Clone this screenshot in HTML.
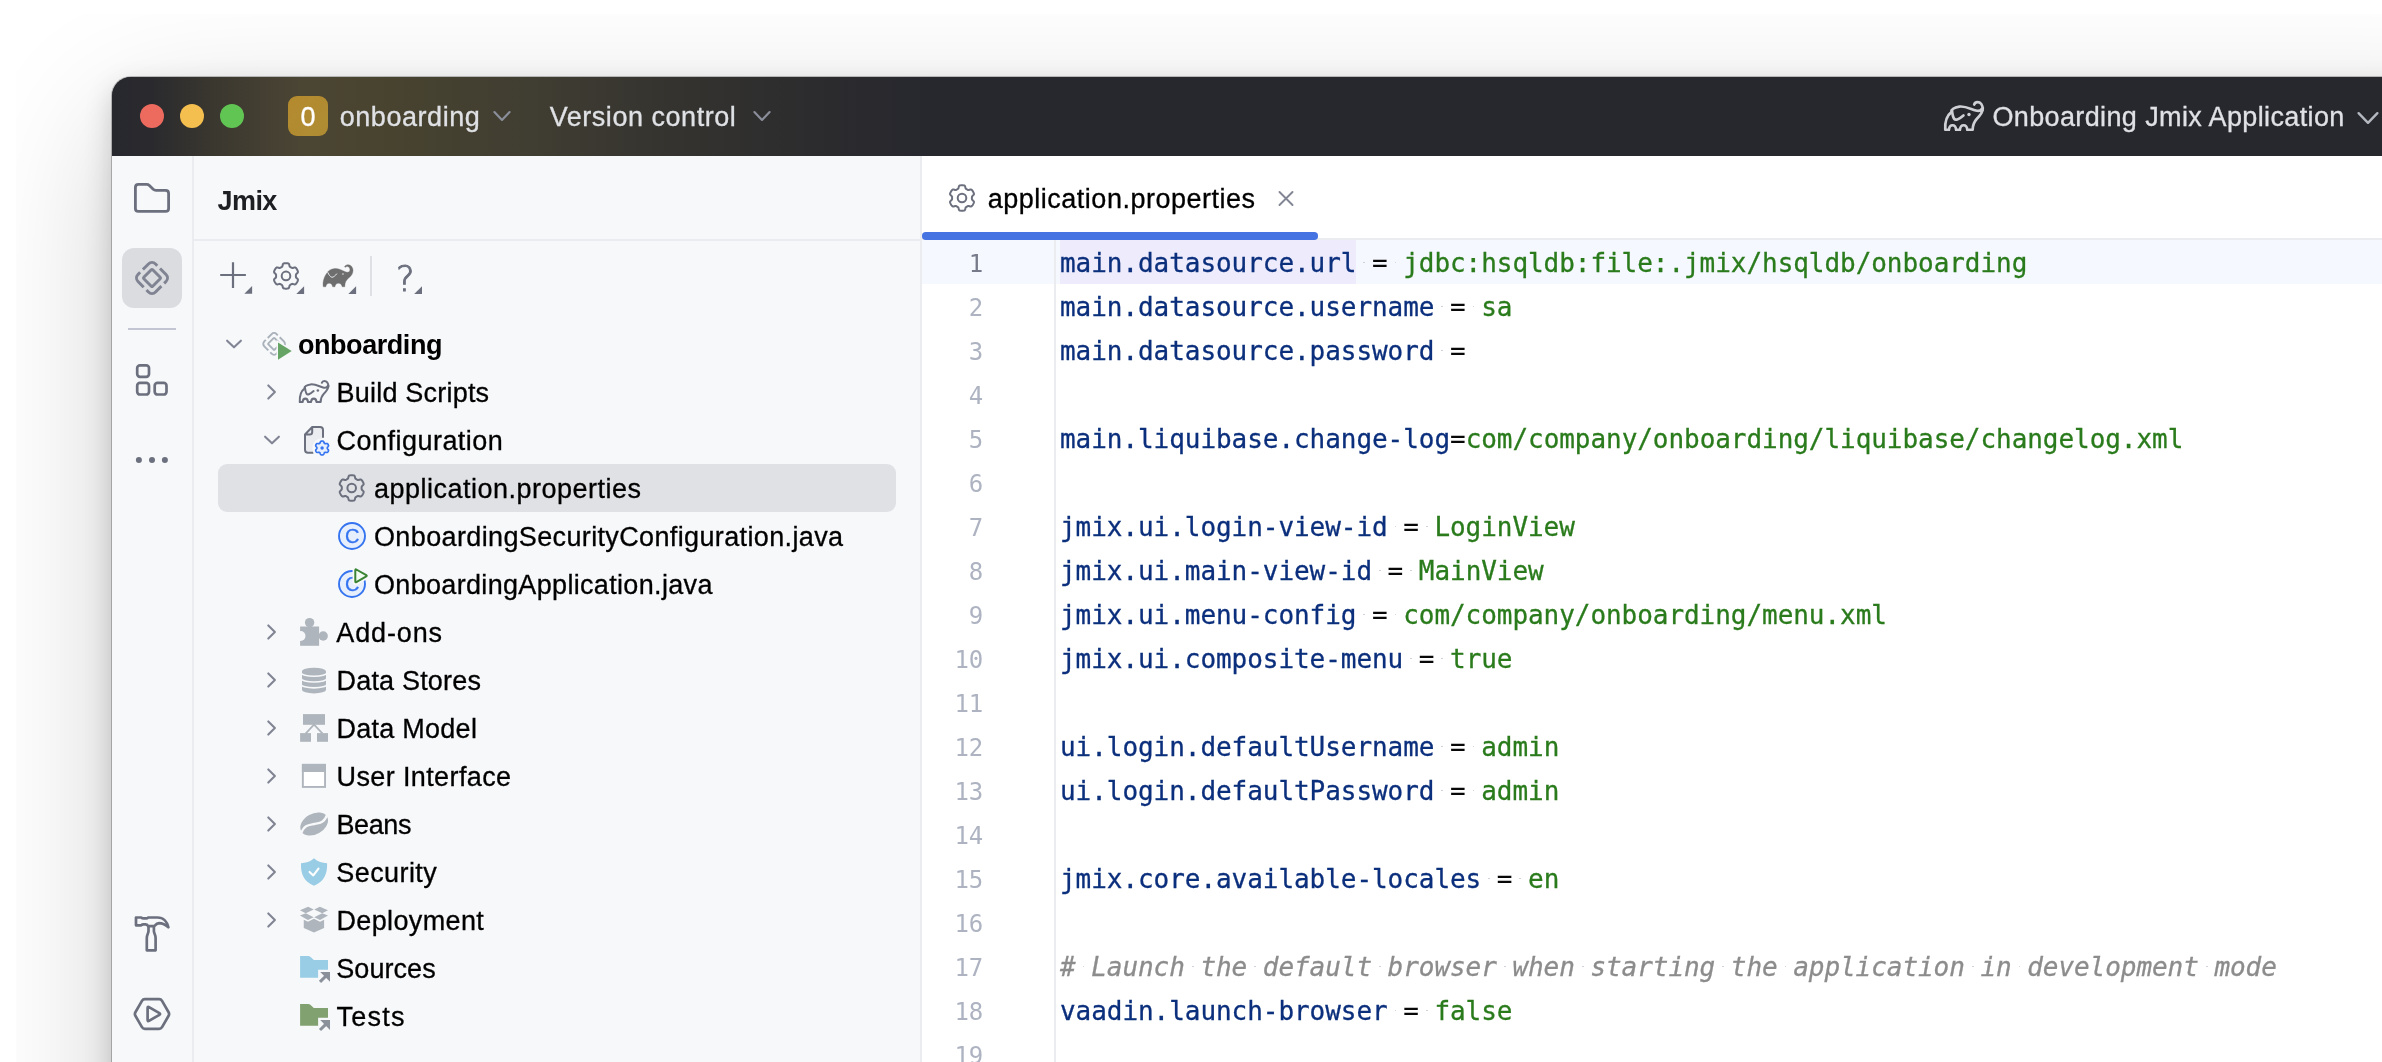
<!DOCTYPE html>
<html><head><meta charset="utf-8"><title>Jmix</title>
<style>
html,body{margin:0;padding:0;background:#fff;}
body{width:2382px;height:1062px;overflow:hidden;position:relative;font-family:'Liberation Sans', sans-serif;}
#win{position:absolute;left:112px;top:77px;width:2400px;height:1100px;border-radius:19px;background:linear-gradient(#27282E 0,#27282E 79px,#F7F8FA 79px);
 box-shadow:0 0 0 1px rgba(0,0,0,.22), 0 10px 28px rgba(0,0,0,.19), 0 45px 140px rgba(0,0,0,.19);overflow:hidden;}
#clipL{position:absolute;left:0;top:0;width:15.5px;height:1062px;background:#fff;}
#clipT{position:absolute;left:0;top:0;width:2382px;height:13.5px;background:#fff;}
#abs{position:absolute;left:0;top:0;width:2382px;height:1062px;overflow:hidden;will-change:transform;}
#tb{position:absolute;left:112px;top:77px;width:2300px;height:79px;border-top-left-radius:19px;
 background:linear-gradient(90deg,#27282E 0px,#2A2A2E 40px,#3A372F 100px,#4B4534 190px,#49442F 260px,#403D32 420px,#34332F 560px,#2B2B2E 720px,#27282E 820px);}
.dot{position:absolute;width:24px;height:24px;border-radius:50%;top:104px;}
#badge{position:absolute;left:288px;top:96px;width:40px;height:40px;border-radius:9px;background:linear-gradient(135deg,#B58A2E,#AE8C33);}
.t{position:absolute;white-space:pre;line-height:40px;height:40px;-webkit-text-stroke:0.3px currentColor;}
#strip{position:absolute;left:112px;top:156px;width:81px;height:920px;background:#F7F8FA;}
#stripsep{position:absolute;left:192px;top:156px;width:2px;height:920px;background:#EBECF0;}
#side{position:absolute;left:194px;top:156px;width:727px;height:920px;background:#F7F8FA;}
#hsep{position:absolute;left:194px;top:239px;width:727px;height:2px;background:#EBECF0;}
#selbtn{position:absolute;left:122px;top:248px;width:60px;height:60px;border-radius:12px;background:#DBDCE0;}
#ssep{position:absolute;left:128px;top:328px;width:48px;height:2px;background:#C3C6D2;}
#selrow{position:absolute;left:218px;top:464px;width:678px;height:48px;border-radius:9px;background:#DFE1E5;}
#tsep{position:absolute;left:370px;top:256px;width:2px;height:40px;background:#DFE0E4;}
#ed{position:absolute;left:922px;top:156px;width:1500px;height:920px;background:#fff;}
#edl{position:absolute;left:920px;top:156px;width:2px;height:920px;background:#EBECF0;}
#tabline{position:absolute;left:922px;top:238px;width:1500px;height:1.5px;background:#EBECF0;}
#tabul{position:absolute;left:922px;top:232px;width:396px;height:7.5px;border-radius:3.75px;background:#4573E2;}
#curline{position:absolute;left:922px;top:240px;width:1500px;height:44px;background:#F5F8FE;}
#curkey{position:absolute;left:1060px;top:240px;width:296px;height:44px;background:#EDEBFC;}
#gsep{position:absolute;left:1054px;top:240px;width:2px;height:900px;background:#EBECF0;}
.ln{position:absolute;left:922px;width:61.2px;text-align:right;font-family:'DejaVu Sans Mono', 'Liberation Mono', monospace;font-size:24px;line-height:44px;height:44px;color:#AEB3C2;padding-top:2px;box-sizing:border-box;letter-spacing:-0.053px;}
.ln.cur{color:#767A8A;}
.cl{position:absolute;left:1060px;white-space:pre;font-family:'DejaVu Sans Mono', 'Liberation Mono', monospace;font-size:26px;line-height:44px;height:44px;padding-top:1px;box-sizing:border-box;color:#080808;letter-spacing:-0.053px;-webkit-text-stroke:0.3px currentColor;}
.k{color:#0B2F7C;} .v{color:#2A7B1C;} .e{color:#080808;-webkit-text-stroke:0.1px #080808;} .c{color:#8C8C8C;font-style:italic;}
.ws{position:absolute;width:1.8px;height:1.8px;background:#C9CCD4;border-radius:1px;}
svg{position:absolute;overflow:visible;}
</style></head><body>
<div id="win"></div>
<div id="clipL"></div><div id="clipT"></div>
<div id="abs">
<div id="tb"></div>
<div class="dot" style="left:140px;background:#EC6A5E"></div>
<div class="dot" style="left:180px;background:#F4BF4F"></div>
<div class="dot" style="left:220px;background:#61C554"></div>
<div id="badge"></div>
<div id="strip"></div><div id="stripsep"></div>
<div id="side"></div><div id="hsep"></div>
<div id="selbtn"></div><div id="ssep"></div><div id="selrow"></div><div id="tsep"></div>
<div id="ed"></div><div id="edl"></div>
<div id="curline"></div><div id="curkey"></div><div id="tabline"></div><div id="tabul"></div><div id="gsep"></div>
<div class="ln cur" style="top:240px">1</div>
<div class="cl" style="top:240px"><span class="k">main.datasource.url</span><span class="e"> = </span><span class="v">jdbc:hsqldb:file:.jmix/hsqldb/onboarding</span></div>
<i class="ws" style="left:1363.4px;top:261.7px"></i>
<i class="ws" style="left:1394.6px;top:261.7px"></i>
<div class="ln " style="top:284px">2</div>
<div class="cl" style="top:284px"><span class="k">main.datasource.username</span><span class="e"> = </span><span class="v">sa</span></div>
<i class="ws" style="left:1441.4px;top:305.7px"></i>
<i class="ws" style="left:1472.6px;top:305.7px"></i>
<div class="ln " style="top:328px">3</div>
<div class="cl" style="top:328px"><span class="k">main.datasource.password</span><span class="e"> =</span></div>
<i class="ws" style="left:1441.4px;top:349.7px"></i>
<div class="ln " style="top:372px">4</div>
<div class="ln " style="top:416px">5</div>
<div class="cl" style="top:416px"><span class="k">main.liquibase.change-log</span><span class="e">=</span><span class="v">com/company/onboarding/liquibase/changelog.xml</span></div>
<div class="ln " style="top:460px">6</div>
<div class="ln " style="top:504px">7</div>
<div class="cl" style="top:504px"><span class="k">jmix.ui.login-view-id</span><span class="e"> = </span><span class="v">LoginView</span></div>
<i class="ws" style="left:1394.6px;top:525.7px"></i>
<i class="ws" style="left:1425.8px;top:525.7px"></i>
<div class="ln " style="top:548px">8</div>
<div class="cl" style="top:548px"><span class="k">jmix.ui.main-view-id</span><span class="e"> = </span><span class="v">MainView</span></div>
<i class="ws" style="left:1379.0px;top:569.7px"></i>
<i class="ws" style="left:1410.2px;top:569.7px"></i>
<div class="ln " style="top:592px">9</div>
<div class="cl" style="top:592px"><span class="k">jmix.ui.menu-config</span><span class="e"> = </span><span class="v">com/company/onboarding/menu.xml</span></div>
<i class="ws" style="left:1363.4px;top:613.7px"></i>
<i class="ws" style="left:1394.6px;top:613.7px"></i>
<div class="ln " style="top:636px">10</div>
<div class="cl" style="top:636px"><span class="k">jmix.ui.composite-menu</span><span class="e"> = </span><span class="v">true</span></div>
<i class="ws" style="left:1410.2px;top:657.7px"></i>
<i class="ws" style="left:1441.4px;top:657.7px"></i>
<div class="ln " style="top:680px">11</div>
<div class="ln " style="top:724px">12</div>
<div class="cl" style="top:724px"><span class="k">ui.login.defaultUsername</span><span class="e"> = </span><span class="v">admin</span></div>
<i class="ws" style="left:1441.4px;top:745.7px"></i>
<i class="ws" style="left:1472.6px;top:745.7px"></i>
<div class="ln " style="top:768px">13</div>
<div class="cl" style="top:768px"><span class="k">ui.login.defaultPassword</span><span class="e"> = </span><span class="v">admin</span></div>
<i class="ws" style="left:1441.4px;top:789.7px"></i>
<i class="ws" style="left:1472.6px;top:789.7px"></i>
<div class="ln " style="top:812px">14</div>
<div class="ln " style="top:856px">15</div>
<div class="cl" style="top:856px"><span class="k">jmix.core.available-locales</span><span class="e"> = </span><span class="v">en</span></div>
<i class="ws" style="left:1488.2px;top:877.7px"></i>
<i class="ws" style="left:1519.4px;top:877.7px"></i>
<div class="ln " style="top:900px">16</div>
<div class="ln " style="top:944px">17</div>
<div class="cl" style="top:944px"><span class="c"># Launch the default browser when starting the application in development mode</span></div>
<i class="ws" style="left:1082.6px;top:965.7px"></i>
<i class="ws" style="left:1191.8px;top:965.7px"></i>
<i class="ws" style="left:1254.2px;top:965.7px"></i>
<i class="ws" style="left:1379.0px;top:965.7px"></i>
<i class="ws" style="left:1503.8px;top:965.7px"></i>
<i class="ws" style="left:1581.8px;top:965.7px"></i>
<i class="ws" style="left:1722.2px;top:965.7px"></i>
<i class="ws" style="left:1784.6px;top:965.7px"></i>
<i class="ws" style="left:1971.8px;top:965.7px"></i>
<i class="ws" style="left:2018.6px;top:965.7px"></i>
<i class="ws" style="left:2205.8px;top:965.7px"></i>
<div class="ln " style="top:988px">18</div>
<div class="cl" style="top:988px"><span class="k">vaadin.launch-browser</span><span class="e"> = </span><span class="v">false</span></div>
<i class="ws" style="left:1394.6px;top:1009.7px"></i>
<i class="ws" style="left:1425.8px;top:1009.7px"></i>
<div class="ln " style="top:1032px">19</div>
<span class="t" style="left:339.7px;top:96.6px;font-size:27px;font-weight:400;color:#DFE1E5;letter-spacing:0.553px">onboarding</span>
<span class="t" style="left:549.7px;top:96.6px;font-size:27px;font-weight:400;color:#DFE1E5;letter-spacing:0.535px">Version control</span>
<span class="t" style="left:1992.4px;top:96.6px;font-size:27px;font-weight:400;color:#DFE1E5;letter-spacing:0.377px">Onboarding Jmix Application</span>
<span class="t" style="left:300.6px;top:96.6px;font-size:27px;font-weight:400;color:#FFFFFF;letter-spacing:0.000px">0</span>
<span class="t" style="left:217.6px;top:181.0px;font-size:27px;font-weight:700;color:#1E1F22;letter-spacing:-0.582px;-webkit-text-stroke:0">Jmix</span>
<span class="t" style="left:297.9px;top:324.6px;font-size:27px;font-weight:700;color:#000000;letter-spacing:-0.432px;-webkit-text-stroke:0">onboarding</span>
<span class="t" style="left:336.6px;top:373.2px;font-size:27px;font-weight:400;color:#000000;letter-spacing:0.203px">Build Scripts</span>
<span class="t" style="left:336.6px;top:421.2px;font-size:27px;font-weight:400;color:#000000;letter-spacing:0.466px">Configuration</span>
<span class="t" style="left:374.0px;top:469.2px;font-size:27px;font-weight:400;color:#000000;letter-spacing:0.492px">application.properties</span>
<span class="t" style="left:374.0px;top:517.2px;font-size:27px;font-weight:400;color:#000000;letter-spacing:0.366px">OnboardingSecurityConfiguration.java</span>
<span class="t" style="left:374.0px;top:565.2px;font-size:27px;font-weight:400;color:#000000;letter-spacing:0.327px">OnboardingApplication.java</span>
<span class="t" style="left:336.3px;top:613.2px;font-size:27px;font-weight:400;color:#000000;letter-spacing:0.870px">Add-ons</span>
<span class="t" style="left:336.5px;top:661.2px;font-size:27px;font-weight:400;color:#000000;letter-spacing:0.182px">Data Stores</span>
<span class="t" style="left:336.5px;top:709.2px;font-size:27px;font-weight:400;color:#000000;letter-spacing:0.258px">Data Model</span>
<span class="t" style="left:336.5px;top:757.2px;font-size:27px;font-weight:400;color:#000000;letter-spacing:0.386px">User Interface</span>
<span class="t" style="left:336.5px;top:805.2px;font-size:27px;font-weight:400;color:#000000;letter-spacing:-0.391px">Beans</span>
<span class="t" style="left:336.3px;top:853.2px;font-size:27px;font-weight:400;color:#000000;letter-spacing:0.422px">Security</span>
<span class="t" style="left:336.5px;top:901.2px;font-size:27px;font-weight:400;color:#000000;letter-spacing:0.358px">Deployment</span>
<span class="t" style="left:336.3px;top:949.2px;font-size:27px;font-weight:400;color:#000000;letter-spacing:0.056px">Sources</span>
<span class="t" style="left:336.6px;top:997.2px;font-size:27px;font-weight:400;color:#000000;letter-spacing:1.192px">Tests</span>
<span class="t" style="left:987.8px;top:178.9px;font-size:27px;font-weight:400;color:#000000;letter-spacing:0.501px">application.properties</span>
<svg width="2382" height="1062" viewBox="0 0 2382 1062" style="left:0;top:0">
<path d="M138.4 184.4 H146.6 Q148.2 184.4 149.4 185.5 L153.2 189.2 Q154.4 190.3 156 190.3 H165.6 Q168.6 190.3 168.6 193.3 V208.4 Q168.6 211.4 165.6 211.4 H138.4 Q135.4 211.4 135.4 208.4 V187.4 Q135.4 184.4 138.4 184.4Z" fill="none" stroke="#6C707E" stroke-width="2.8" stroke-linejoin="round"/>
<g transform="translate(152 278) rotate(45)" fill="none" stroke="#7F8392" stroke-width="2.95"><rect x="-12.40" y="-12.40" width="24.80" height="24.80" rx="5.00" stroke-dasharray="18.75 3.90" stroke-dashoffset="16.30"/><rect x="-6.30" y="-6.30" width="12.60" height="12.60" rx="1.00"/></g>
<rect x="137.2" y="365.3" width="11.8" height="11.6" rx="2.8" fill="none" stroke="#6C707E" stroke-width="2.7"/>
<rect x="137.2" y="382.9" width="11.8" height="11.6" rx="2.8" fill="none" stroke="#6C707E" stroke-width="2.7"/>
<rect x="154.7" y="382.9" width="11.8" height="11.6" rx="2.8" fill="none" stroke="#6C707E" stroke-width="2.7"/>
<circle cx="138.9" cy="460" r="3" fill="#6C707E"/>
<circle cx="152" cy="460" r="3" fill="#6C707E"/>
<circle cx="164.9" cy="460" r="3" fill="#6C707E"/>
<g fill="none" stroke="#6C707E" stroke-width="2.7" stroke-linejoin="round" stroke-linecap="round"><path d="M136 917.5 H141.2 Q142.2 918.4 143.6 918.4 H146 Q147.3 918.4 148.3 917.5 H157.5 C163.5 917.5 167.3 922 168.4 927.3 C165.5 924.6 162.5 923.2 159 923.1 C157.3 923.1 155.6 924.6 154.2 926.1 H148.2 Q147 924.4 145.5 924.4 H143.4 Q142.2 924.4 141.2 925.3 H136 Z"/><path d="M148.5 926.3 V931 C148.5 933.5 146.8 934.8 146.8 938 V950.3 H155.6 V938 C155.6 934.8 153.9 933.5 153.9 931 V926.3"/></g>
<path d="M135.39 1015.74 Q134.40 1014.00 135.39 1012.26 L141.95 1000.84 Q142.94 999.10 144.94 999.10 L159.06 999.10 Q161.06 999.10 162.05 1000.84 L168.61 1012.26 Q169.60 1014.00 168.61 1015.74 L162.05 1027.16 Q161.06 1028.90 159.06 1028.90 L144.94 1028.90 Q142.94 1028.90 141.95 1027.16 Z" fill="none" stroke="#6C707E" stroke-width="2.7"/>
<path d="M147.60 1008.00 Q147.60 1006.40 148.99 1007.20 L159.41 1013.20 Q160.80 1014.00 159.41 1014.80 L148.99 1020.80 Q147.60 1021.60 147.60 1020.00 Z" fill="none" stroke="#6C707E" stroke-width="2.7" stroke-linejoin="round"/>
<path d="M220.2 275 H245.9 M233 262.3 V288" fill="none" stroke="#6C707E" stroke-width="2.2"/>
<path d="M252.10000000000002 286 L252.10000000000002 293.8 L244.3 293.8Z" fill="#6C707E"/>
<path d="M295.90 275.90 L295.90 275.47 L295.91 275.03 L295.98 274.59 L296.24 274.09 L296.89 273.49 L297.64 272.78 L297.95 272.13 L297.92 271.56 L297.76 271.03 L297.55 270.51 L297.31 270.01 L297.04 269.52 L296.75 269.05 L296.44 268.59 L296.10 268.15 L295.72 267.74 L295.24 267.43 L294.52 267.38 L293.54 267.67 L292.68 267.93 L292.13 267.92 L291.71 267.75 L291.32 267.54 L290.95 267.33 L290.58 267.11 L290.20 266.88 L289.85 266.60 L289.56 266.13 L289.35 265.26 L289.12 264.26 L288.71 263.66 L288.20 263.40 L287.66 263.28 L287.11 263.20 L286.56 263.16 L286.00 263.15 L285.44 263.16 L284.89 263.20 L284.34 263.28 L283.80 263.40 L283.29 263.66 L282.88 264.26 L282.65 265.26 L282.44 266.13 L282.15 266.60 L281.80 266.88 L281.42 267.11 L281.05 267.33 L280.68 267.54 L280.29 267.75 L279.87 267.92 L279.32 267.93 L278.46 267.67 L277.48 267.38 L276.76 267.43 L276.28 267.74 L275.90 268.15 L275.56 268.59 L275.25 269.05 L274.96 269.52 L274.69 270.01 L274.45 270.51 L274.24 271.03 L274.08 271.56 L274.05 272.13 L274.36 272.78 L275.11 273.49 L275.76 274.09 L276.02 274.59 L276.09 275.03 L276.10 275.47 L276.10 275.90 L276.10 276.33 L276.09 276.77 L276.02 277.21 L275.76 277.71 L275.11 278.31 L274.36 279.02 L274.05 279.67 L274.08 280.24 L274.24 280.77 L274.45 281.29 L274.69 281.79 L274.96 282.27 L275.25 282.75 L275.56 283.21 L275.90 283.65 L276.28 284.06 L276.76 284.37 L277.48 284.42 L278.46 284.13 L279.32 283.87 L279.87 283.88 L280.29 284.05 L280.68 284.26 L281.05 284.47 L281.42 284.69 L281.80 284.92 L282.15 285.20 L282.44 285.67 L282.65 286.54 L282.88 287.54 L283.29 288.14 L283.80 288.40 L284.34 288.52 L284.89 288.60 L285.44 288.64 L286.00 288.65 L286.56 288.64 L287.11 288.60 L287.66 288.52 L288.20 288.40 L288.71 288.14 L289.12 287.54 L289.35 286.54 L289.56 285.67 L289.85 285.20 L290.20 284.92 L290.58 284.69 L290.95 284.47 L291.32 284.26 L291.71 284.05 L292.13 283.88 L292.68 283.87 L293.54 284.13 L294.52 284.42 L295.24 284.37 L295.72 284.06 L296.10 283.65 L296.44 283.21 L296.75 282.75 L297.04 282.27 L297.31 281.79 L297.55 281.29 L297.76 280.77 L297.92 280.24 L297.95 279.67 L297.64 279.02 L296.89 278.31 L296.24 277.71 L295.98 277.21 L295.91 276.77 L295.90 276.33Z" fill="none" stroke="#6C707E" stroke-width="2.0" stroke-linejoin="round"/><circle cx="286" cy="275.9" r="4.3" fill="none" stroke="#6C707E" stroke-width="2.0"/>
<path d="M304.1 286.2 L304.1 294.0 L296.3 294.0Z" fill="#6C707E"/>
<g transform="translate(312.66 253.80) scale(0.04220)"><path d="M252 782 C235 700 250 560 352 437 C370 400 420 365 500 352 C600 340 680 380 762 421 C800 440 850 445 874 413 C895 380 880 330 850 312 C820 295 790 300 768 322 L756 300 C775 268 820 255 850 258 C910 265 955 320 957 390 C958 460 920 520 882 549 C830 590 790 640 772 690 C765 720 762 750 762 782 L698 782 C690 720 650 698 609 698 C570 698 535 720 529 782 L473 782 C465 720 430 698 392 698 C355 698 320 720 312 782 Z" fill="#6E6E6E" stroke="#6E6E6E" stroke-width="8" stroke-linejoin="round"/><path d="M360 445 C385 500 420 550 457 557 C490 560 540 515 569 477" fill="none" stroke="#F7F8FA" stroke-width="21" stroke-linecap="round"/><circle cx="718" cy="477" r="17" fill="#F7F8FA"/></g>
<path d="M356.1 286.2 L356.1 294.0 L348.3 294.0Z" fill="#6C707E"/>
<path d="M422.0 286.2 L422.0 294.0 L414.2 294.0Z" fill="#6C707E"/>
<path d="M494.4 112.1 L502 119.9 L509.6 112.1" fill="none" stroke="#8A8E9A" stroke-width="2.2" stroke-linecap="round" stroke-linejoin="round"/>
<path d="M754.4 112.1 L762 119.9 L769.6 112.1" fill="none" stroke="#8A8E9A" stroke-width="2.2" stroke-linecap="round" stroke-linejoin="round"/>
<path d="M2358.6 113.2 L2368 122.8 L2377.4 113.2" fill="none" stroke="#B4B8BF" stroke-width="2.4" stroke-linecap="round" stroke-linejoin="round"/>
<g transform="translate(1930.00 86.00) scale(0.05650)" stroke-width="47" stroke-linejoin="round" stroke-linecap="round"><path d="M270 775 C262 640 300 520 378 462 C372 420 420 378 520 365 C630 352 720 410 810 435 C860 448 900 440 920 400 L935 390 C935 460 890 520 830 580 C775 640 755 700 755 775 L660 775 C650 668 540 668 530 775 L462 775 C452 668 345 668 335 775 Z" fill="none" stroke="#CED0D6"/><path d="M932 420 C940 330 890 285 840 285 C810 285 790 305 782 328" fill="none" stroke="#CED0D6"/><path d="M388 425 C395 490 405 545 425 578 C450 612 500 600 592 520" fill="none" stroke="#CED0D6" stroke-width="47"/><circle cx="690" cy="505" r="30" fill="#CED0D6" stroke="none"/></g>
<path d="M971.90 198.00 L971.90 197.57 L971.91 197.13 L971.98 196.69 L972.24 196.19 L972.89 195.59 L973.64 194.88 L973.95 194.23 L973.92 193.66 L973.76 193.13 L973.55 192.61 L973.31 192.11 L973.04 191.62 L972.75 191.15 L972.44 190.69 L972.10 190.25 L971.72 189.84 L971.24 189.53 L970.52 189.48 L969.54 189.77 L968.68 190.03 L968.13 190.02 L967.71 189.85 L967.32 189.64 L966.95 189.43 L966.58 189.21 L966.20 188.98 L965.85 188.70 L965.56 188.23 L965.35 187.36 L965.12 186.36 L964.71 185.76 L964.20 185.50 L963.66 185.38 L963.11 185.30 L962.56 185.26 L962.00 185.25 L961.44 185.26 L960.89 185.30 L960.34 185.38 L959.80 185.50 L959.29 185.76 L958.88 186.36 L958.65 187.36 L958.44 188.23 L958.15 188.70 L957.80 188.98 L957.42 189.21 L957.05 189.43 L956.68 189.64 L956.29 189.85 L955.87 190.02 L955.32 190.03 L954.46 189.77 L953.48 189.48 L952.76 189.53 L952.28 189.84 L951.90 190.25 L951.56 190.69 L951.25 191.15 L950.96 191.62 L950.69 192.11 L950.45 192.61 L950.24 193.13 L950.08 193.66 L950.05 194.23 L950.36 194.88 L951.11 195.59 L951.76 196.19 L952.02 196.69 L952.09 197.13 L952.10 197.57 L952.10 198.00 L952.10 198.43 L952.09 198.87 L952.02 199.31 L951.76 199.81 L951.11 200.41 L950.36 201.12 L950.05 201.77 L950.08 202.34 L950.24 202.87 L950.45 203.39 L950.69 203.89 L950.96 204.38 L951.25 204.85 L951.56 205.31 L951.90 205.75 L952.28 206.16 L952.76 206.47 L953.48 206.52 L954.46 206.23 L955.32 205.97 L955.87 205.98 L956.29 206.15 L956.68 206.36 L957.05 206.57 L957.42 206.79 L957.80 207.02 L958.15 207.30 L958.44 207.77 L958.65 208.64 L958.88 209.64 L959.29 210.24 L959.80 210.50 L960.34 210.62 L960.89 210.70 L961.44 210.74 L962.00 210.75 L962.56 210.74 L963.11 210.70 L963.66 210.62 L964.20 210.50 L964.71 210.24 L965.12 209.64 L965.35 208.64 L965.56 207.77 L965.85 207.30 L966.20 207.02 L966.58 206.79 L966.95 206.57 L967.32 206.36 L967.71 206.15 L968.13 205.98 L968.68 205.97 L969.54 206.23 L970.52 206.52 L971.24 206.47 L971.72 206.16 L972.10 205.75 L972.44 205.31 L972.75 204.85 L973.04 204.38 L973.31 203.89 L973.55 203.39 L973.76 202.87 L973.92 202.34 L973.95 201.77 L973.64 201.12 L972.89 200.41 L972.24 199.81 L971.98 199.31 L971.91 198.87 L971.90 198.43Z" fill="none" stroke="#6C707E" stroke-width="2.0" stroke-linejoin="round"/><circle cx="962" cy="198" r="4.3" fill="none" stroke="#6C707E" stroke-width="2.0"/>
<path d="M1279.5 192 L1292.5 205 M1292.5 192 L1279.5 205" stroke="#818594" stroke-width="1.9" fill="none" stroke-linecap="round"/>
<path d="M227.1 340.7 L234 347.3 L240.9 340.7" fill="none" stroke="#818594" stroke-width="2.1" stroke-linecap="round" stroke-linejoin="round"/>
<path d="M268.3 385.4 L274.90000000000003 392 L268.3 398.6" fill="none" stroke="#818594" stroke-width="2.1" stroke-linecap="round" stroke-linejoin="round"/>
<path d="M265.1 436.7 L272 443.3 L278.9 436.7" fill="none" stroke="#818594" stroke-width="2.1" stroke-linecap="round" stroke-linejoin="round"/>
<path d="M268.3 625.4 L274.90000000000003 632 L268.3 638.6" fill="none" stroke="#818594" stroke-width="2.1" stroke-linecap="round" stroke-linejoin="round"/>
<path d="M268.3 673.4 L274.90000000000003 680 L268.3 686.6" fill="none" stroke="#818594" stroke-width="2.1" stroke-linecap="round" stroke-linejoin="round"/>
<path d="M268.3 721.4 L274.90000000000003 728 L268.3 734.6" fill="none" stroke="#818594" stroke-width="2.1" stroke-linecap="round" stroke-linejoin="round"/>
<path d="M268.3 769.4 L274.90000000000003 776 L268.3 782.6" fill="none" stroke="#818594" stroke-width="2.1" stroke-linecap="round" stroke-linejoin="round"/>
<path d="M268.3 817.4 L274.90000000000003 824 L268.3 830.6" fill="none" stroke="#818594" stroke-width="2.1" stroke-linecap="round" stroke-linejoin="round"/>
<path d="M268.3 865.4 L274.90000000000003 872 L268.3 878.6" fill="none" stroke="#818594" stroke-width="2.1" stroke-linecap="round" stroke-linejoin="round"/>
<path d="M268.3 913.4 L274.90000000000003 920 L268.3 926.6" fill="none" stroke="#818594" stroke-width="2.1" stroke-linecap="round" stroke-linejoin="round"/>
<g transform="translate(274.1 343.9) rotate(45)" fill="none" stroke="#A9B1BA" stroke-width="1.9"><rect x="-8.68" y="-8.68" width="17.36" height="17.36" rx="3.50" stroke-dasharray="13.12 2.73" stroke-dashoffset="11.41"/><rect x="-4.41" y="-4.41" width="8.82" height="8.82" rx="0.70"/></g>
<path d="M278 342.4 L291.7 350.9 L278 359.8Z" fill="#65A465" stroke="#F7F8FA" stroke-width="3" paint-order="stroke" stroke-linejoin="miter"/>
<g transform="translate(288.15 368.70) scale(0.04306)" stroke-width="47" stroke-linejoin="round" stroke-linecap="round"><path d="M270 775 C262 640 300 520 378 462 C372 420 420 378 520 365 C630 352 720 410 810 435 C860 448 900 440 920 400 L935 390 C935 460 890 520 830 580 C775 640 755 700 755 775 L660 775 C650 668 540 668 530 775 L462 775 C452 668 345 668 335 775 Z" fill="none" stroke="#6C707E"/><path d="M932 420 C940 330 890 285 840 285 C810 285 790 305 782 328" fill="none" stroke="#6C707E"/><path d="M388 425 C395 490 405 545 425 578 C450 612 500 600 592 520" fill="none" stroke="#6C707E" stroke-width="47"/><circle cx="690" cy="505" r="30" fill="#6C707E" stroke="none"/></g>
<path d="M323 437.8 V430 Q323 427 320 427 H312.2 L305 434.5 V449.8 Q305 452.8 308 452.8 H313.4" fill="#EBECF0" stroke="none"/>
<path d="M305 434.5 L312.2 427 H320 Q323 427 323 430 V448 L313 452.8 H308 Q305 452.8 305 449.8Z" fill="#EBECF0" stroke="none"/>
<path d="M323 437.8 V430 Q323 427 320 427 H312.2 L305 434.5 V449.8 Q305 452.8 308 452.8 H313.4 M312.2 427 V432 Q312.2 434.5 309.7 434.5 H305" fill="none" stroke="#6C707E" stroke-width="2" stroke-linejoin="round"/>
<circle cx="322.1" cy="448" r="9.8" fill="#F7F8FA"/>
<path d="M327.30 448.00 L327.31 447.77 L327.36 447.54 L327.47 447.29 L327.65 447.02 L327.93 446.71 L328.22 446.36 L328.43 446.00 L328.51 445.67 L328.50 445.35 L328.42 445.05 L328.30 444.77 L328.16 444.50 L328.00 444.24 L327.81 444.00 L327.59 443.79 L327.33 443.61 L326.99 443.52 L326.58 443.52 L326.13 443.60 L325.73 443.68 L325.39 443.71 L325.13 443.67 L324.90 443.60 L324.70 443.50 L324.51 443.37 L324.33 443.21 L324.17 443.00 L324.03 442.70 L323.90 442.30 L323.74 441.88 L323.54 441.52 L323.28 441.28 L323.00 441.14 L322.71 441.06 L322.41 441.01 L322.10 441.00 L321.79 441.01 L321.49 441.06 L321.20 441.14 L320.92 441.28 L320.66 441.52 L320.46 441.88 L320.30 442.30 L320.17 442.70 L320.03 443.00 L319.87 443.21 L319.69 443.37 L319.50 443.50 L319.30 443.60 L319.07 443.67 L318.81 443.71 L318.47 443.68 L318.07 443.60 L317.62 443.52 L317.21 443.52 L316.87 443.61 L316.61 443.79 L316.39 444.00 L316.20 444.24 L316.04 444.50 L315.90 444.77 L315.78 445.05 L315.70 445.35 L315.69 445.67 L315.77 446.00 L315.98 446.36 L316.27 446.71 L316.55 447.02 L316.73 447.29 L316.84 447.54 L316.89 447.77 L316.90 448.00 L316.89 448.23 L316.84 448.46 L316.73 448.71 L316.55 448.98 L316.27 449.29 L315.98 449.64 L315.77 450.00 L315.69 450.33 L315.70 450.65 L315.78 450.95 L315.90 451.23 L316.04 451.50 L316.20 451.76 L316.39 452.00 L316.61 452.21 L316.87 452.39 L317.21 452.48 L317.62 452.48 L318.07 452.40 L318.47 452.32 L318.81 452.29 L319.07 452.33 L319.30 452.40 L319.50 452.50 L319.69 452.63 L319.87 452.79 L320.03 453.00 L320.17 453.30 L320.30 453.70 L320.46 454.12 L320.66 454.48 L320.92 454.72 L321.20 454.86 L321.49 454.94 L321.79 454.99 L322.10 455.00 L322.41 454.99 L322.71 454.94 L323.00 454.86 L323.28 454.72 L323.54 454.48 L323.74 454.12 L323.90 453.70 L324.03 453.30 L324.17 453.00 L324.33 452.79 L324.51 452.63 L324.70 452.50 L324.90 452.40 L325.13 452.33 L325.39 452.29 L325.73 452.32 L326.13 452.40 L326.58 452.48 L326.99 452.48 L327.33 452.39 L327.59 452.21 L327.81 452.00 L328.00 451.76 L328.16 451.50 L328.30 451.23 L328.42 450.95 L328.50 450.65 L328.51 450.33 L328.43 450.00 L328.22 449.64 L327.93 449.29 L327.65 448.98 L327.47 448.71 L327.36 448.46 L327.31 448.23Z" fill="#E7EFFD" stroke="#3574F0" stroke-width="1.7" stroke-linejoin="round"/><circle cx="322.1" cy="448" r="1.7" fill="#3574F0"/>
<path d="M361.60 488.00 L361.60 487.57 L361.61 487.13 L361.68 486.69 L361.94 486.19 L362.59 485.59 L363.34 484.88 L363.65 484.23 L363.62 483.66 L363.46 483.13 L363.25 482.61 L363.01 482.11 L362.74 481.62 L362.45 481.15 L362.14 480.69 L361.80 480.25 L361.42 479.84 L360.94 479.53 L360.22 479.48 L359.24 479.77 L358.38 480.03 L357.83 480.02 L357.41 479.85 L357.02 479.64 L356.65 479.43 L356.28 479.21 L355.90 478.98 L355.55 478.70 L355.26 478.23 L355.05 477.36 L354.82 476.36 L354.41 475.76 L353.90 475.50 L353.36 475.38 L352.81 475.30 L352.26 475.26 L351.70 475.25 L351.14 475.26 L350.59 475.30 L350.04 475.38 L349.50 475.50 L348.99 475.76 L348.58 476.36 L348.35 477.36 L348.14 478.23 L347.85 478.70 L347.50 478.98 L347.12 479.21 L346.75 479.43 L346.38 479.64 L345.99 479.85 L345.57 480.02 L345.02 480.03 L344.16 479.77 L343.18 479.48 L342.46 479.53 L341.98 479.84 L341.60 480.25 L341.26 480.69 L340.95 481.15 L340.66 481.62 L340.39 482.11 L340.15 482.61 L339.94 483.13 L339.78 483.66 L339.75 484.23 L340.06 484.88 L340.81 485.59 L341.46 486.19 L341.72 486.69 L341.79 487.13 L341.80 487.57 L341.80 488.00 L341.80 488.43 L341.79 488.87 L341.72 489.31 L341.46 489.81 L340.81 490.41 L340.06 491.12 L339.75 491.77 L339.78 492.34 L339.94 492.87 L340.15 493.39 L340.39 493.89 L340.66 494.38 L340.95 494.85 L341.26 495.31 L341.60 495.75 L341.98 496.16 L342.46 496.47 L343.18 496.52 L344.16 496.23 L345.02 495.97 L345.57 495.98 L345.99 496.15 L346.38 496.36 L346.75 496.57 L347.12 496.79 L347.50 497.02 L347.85 497.30 L348.14 497.77 L348.35 498.64 L348.58 499.64 L348.99 500.24 L349.50 500.50 L350.04 500.62 L350.59 500.70 L351.14 500.74 L351.70 500.75 L352.26 500.74 L352.81 500.70 L353.36 500.62 L353.90 500.50 L354.41 500.24 L354.82 499.64 L355.05 498.64 L355.26 497.77 L355.55 497.30 L355.90 497.02 L356.28 496.79 L356.65 496.57 L357.02 496.36 L357.41 496.15 L357.83 495.98 L358.38 495.97 L359.24 496.23 L360.22 496.52 L360.94 496.47 L361.42 496.16 L361.80 495.75 L362.14 495.31 L362.45 494.85 L362.74 494.38 L363.01 493.89 L363.25 493.39 L363.46 492.87 L363.62 492.34 L363.65 491.77 L363.34 491.12 L362.59 490.41 L361.94 489.81 L361.68 489.31 L361.61 488.87 L361.60 488.43Z" fill="none" stroke="#6C707E" stroke-width="2.0" stroke-linejoin="round"/><circle cx="351.7" cy="488" r="4.3" fill="none" stroke="#6C707E" stroke-width="2.0"/>
<circle cx="352" cy="536" r="13" fill="#E7EFFD" stroke="#3574F0" stroke-width="1.9"/><text x="352.2" y="543.1" text-anchor="middle" font-family="Liberation Sans, sans-serif" font-size="20" fill="#3574F0" stroke="#3574F0" stroke-width="0.3">C</text>
<circle cx="352" cy="584" r="13" fill="#E7EFFD" stroke="#3574F0" stroke-width="1.9"/><text x="352.2" y="591.1" text-anchor="middle" font-family="Liberation Sans, sans-serif" font-size="20" fill="#3574F0" stroke="#3574F0" stroke-width="0.3">C</text>
<path d="M355.30 570.10 Q355.30 568.90 356.34 569.50 L366.26 575.20 Q367.30 575.80 366.26 576.40 L356.34 582.10 Q355.30 582.70 355.30 581.50 Z" fill="#F2FCF3" stroke="#F7F8FA" stroke-width="5.5" stroke-linejoin="round"/>
<path d="M355.30 570.10 Q355.30 568.90 356.34 569.50 L366.26 575.20 Q367.30 575.80 366.26 576.40 L356.34 582.10 Q355.30 582.70 355.30 581.50 Z" fill="#F2FCF3" stroke="#3A8433" stroke-width="2" stroke-linejoin="round"/>
<path d="M300.1 626.5 H319.1 V645.8 H300.1Z" fill="#AEB5BC"/><circle cx="309.6" cy="622.6" r="4.7" fill="#AEB5BC"/><circle cx="323.2" cy="636" r="4.7" fill="#AEB5BC"/><circle cx="300.6" cy="636" r="4.9" fill="#F7F8FA"/>
<path d="M302 671.3 V689.9 A12 3.5 0 0 0 326 689.9 V671.3Z" fill="#AEB5BC"/><ellipse cx="314" cy="671.3" rx="12" ry="3.5" fill="#AEB5BC"/><path d="M301 672.6 A12.6 3.6 0 0 0 327 672.6" fill="none" stroke="#F7F8FA" stroke-width="1.6"/><path d="M301 678.3 A12.6 3.6 0 0 0 327 678.3" fill="none" stroke="#F7F8FA" stroke-width="1.6"/><path d="M301 684.2 A12.6 3.6 0 0 0 327 684.2" fill="none" stroke="#F7F8FA" stroke-width="1.6"/>
<rect x="303" y="714.1" width="22" height="10.7" fill="#AEB5BC"/><rect x="300.1" y="733.1" width="10.9" height="8.7" fill="#AEB5BC"/><rect x="317" y="733.1" width="11" height="8.7" fill="#AEB5BC"/><path d="M305.6 733.6 L314 724.6 L322.6 733.6" fill="none" stroke="#AEB5BC" stroke-width="1.7"/>
<rect x="302.85" y="764.85" width="22.2" height="22.1" fill="#FFFFFF" stroke="#AEB5BC" stroke-width="1.9"/><rect x="301.9" y="763.9" width="24.1" height="8.1" fill="#AEB5BC"/>
<g transform="translate(314.15 824) rotate(-29)"><ellipse cx="0" cy="0" rx="14.8" ry="10.2" fill="#AEB5BC"/><path d="M-15.5 1.6 C-9 -4.2 -5 -1.6 0 0 C5 1.6 9 4.2 15.5 -1.6" fill="none" stroke="#F7F8FA" stroke-width="2.3"/></g>
<path d="M314 858.2 C310.5 861.5 305.5 863 301 863.2 C300.5 874 304 881.5 314 885.8 C324 881.5 327.5 874 327.1 863.2 C322.5 863 317.5 861.5 314 858.2Z" fill="#99CDE5"/><path d="M309.6 871.9 L313.3 875.4 L318.5 868.7" fill="none" stroke="#fff" stroke-width="2.1" stroke-linecap="round" stroke-linejoin="round"/>
<path d="M299.96 910.29 L308.09 906.85 L313.70 909.56 L305.74 913.18Z" fill="#AEB5BC"/>
<path d="M314.24 909.56 L319.85 906.85 L327.99 910.29 L322.20 913.18Z" fill="#AEB5BC"/>
<path d="M299.96 915.44 L305.74 913.36 L313.70 917.34 L307.91 920.05Z" fill="#AEB5BC"/>
<path d="M327.99 915.44 L322.20 913.36 L314.24 917.34 L320.03 920.05Z" fill="#AEB5BC"/>
<path d="M303.75 919.69 L307.91 921.68 L313.97 918.78 L320.03 921.68 L324.10 919.69 L324.10 928.10 L313.97 932.62 L303.75 928.10Z" fill="#AEB5BC"/>
<path d="M300.1 955.9 H308.2 Q309.6 955.9 310.6 956.9 L313.8 959.9 H328 V969.6999999999999 H318.1 V977.6999999999999 H300.1Z" fill="#98CDE5"/><path d="M320.2 972.0 H330 V981.8Z" fill="#8B919A"/><path d="M320 981.9 L326.5 975.5" stroke="#8B919A" stroke-width="3.1" fill="none"/>
<path d="M300.1 1004 H308.2 Q309.6 1004 310.6 1005 L313.8 1008 H328 V1017.8 H318.1 V1025.8 H300.1Z" fill="#81A170"/><path d="M320.2 1020.1 H330 V1029.9Z" fill="#8B919A"/><path d="M320 1030 L326.5 1023.6" stroke="#8B919A" stroke-width="3.1" fill="none"/>
</svg>
<span class="t" style="left:396px;top:254.5px;font-family:'DejaVu Sans Light','DejaVu Sans',sans-serif;font-weight:200;font-size:35px;line-height:48px;height:48px;color:#6C707E;-webkit-text-stroke:1px #6C707E">?</span>

</div>
</body></html>
